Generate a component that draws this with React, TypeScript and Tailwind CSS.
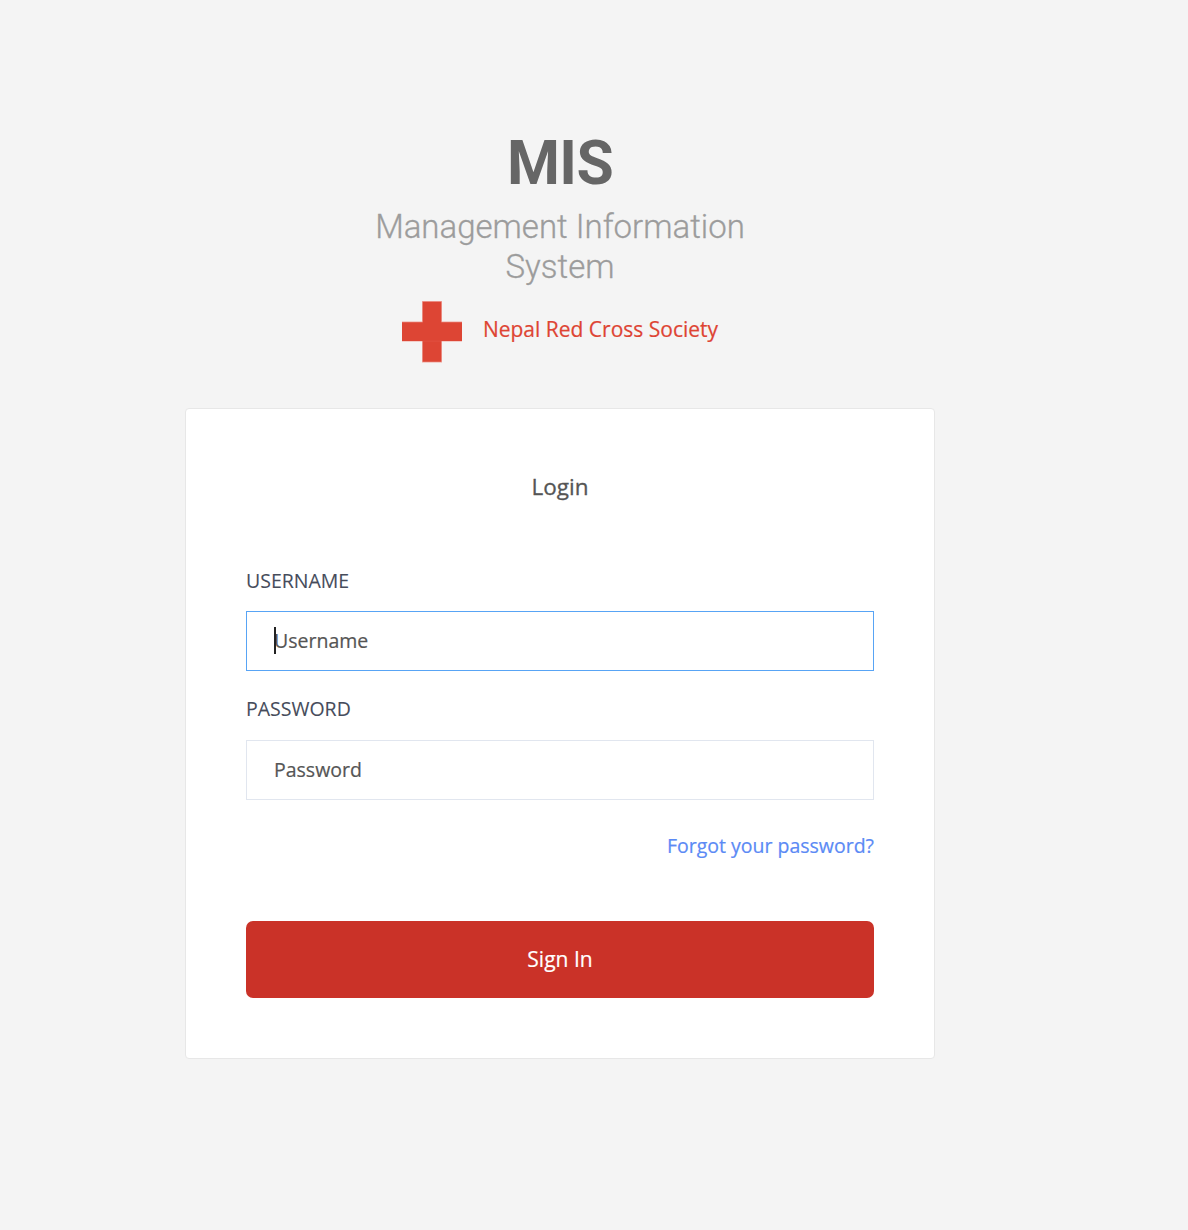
export default function App() {
  return (
    <div className="flex h-[1230px] w-full flex-col overflow-hidden bg-[#f4f4f4] pl-[185px] font-['Open_Sans',sans-serif]">
      <div className="flex w-[750px] flex-col">
        <header className="flex h-[408px] flex-col items-center pt-[129px] font-['Roboto',sans-serif]">
          <h1 className="h-[78px] text-[60.5px] leading-[70px] font-bold tracking-[-0.6px] text-[#666666]">MIS</h1>
          <h2 className="w-[400px] text-center text-[33px] leading-[40px] font-light text-[#9c9c9c] [-webkit-text-stroke:0.3px_#9c9c9c]">Management Information System</h2>
          <div className="mt-[13px] flex h-[62px] items-center gap-[21px] font-['Open_Sans',sans-serif]">
            <svg className="mt-px h-[62px] w-[60px]" viewBox="0 0 60 62">
              <path d="M20 0h20v20.5h20v20H40v21H20v-21H0v-20h20z" fill="#efa69e" />
              <path d="M20.7 0.7h18.6v20.6H60v18.7H39.3v20.7H20.7V40H0V21.3h20.7z" fill="#dd4534" />
              <path d="M20.7 39.7h18.6v0.8H20.7z" fill="#e05243" />
            </svg>
            <span className="mb-1 text-[21px] leading-[30px] text-[#de4433] [-webkit-text-stroke:0.2px_#de4433]">Nepal Red Cross Society</span>
          </div>
        </header>
        <form className="flex h-[651px] flex-col rounded-[4px] border border-[#e7e7e7] bg-white px-[60px] pt-[62px]">
          <h3 className="h-[94px] text-center text-[22.5px] leading-[32px] text-[#555555] [-webkit-text-stroke:0.3px_#555555]">Login</h3>
          <label className="h-[46px] text-[19.5px] leading-[31px] text-[#464c5b] [-webkit-text-stroke:0.1px_#464c5b]">USERNAME</label>
          <div className="relative flex h-[60px] shrink-0 items-center border border-[#58a4f5] px-[27px] text-[19.5px] text-[#555555] [-webkit-text-stroke:0.2px_#555555]">
            Username
            <span className="absolute top-[15px] left-[27px] h-[27px] w-[2px] bg-[#222222]" />
          </div>
          <label className="mt-[22px] h-[47px] text-[19.5px] leading-[31px] text-[#464c5b] [-webkit-text-stroke:0.1px_#464c5b]">PASSWORD</label>
          <div className="flex h-[60px] shrink-0 items-center border border-[#e1e6ef] px-[27px] text-[19.5px] text-[#555555] [-webkit-text-stroke:0.2px_#555555]">Password</div>
          <a className="mt-[30px] self-end text-[19.5px] leading-[32px] text-[#5b8af5] [-webkit-text-stroke:0.2px_#5b8af5]">Forgot your password?</a>
          <button type="button" className="mt-[59px] h-[77px] shrink-0 rounded-[7px] bg-[#ca3228] text-[21px] text-white [-webkit-text-stroke:0.2px_#ffffff]">Sign In</button>
        </form>
      </div>
    </div>
  );
}
